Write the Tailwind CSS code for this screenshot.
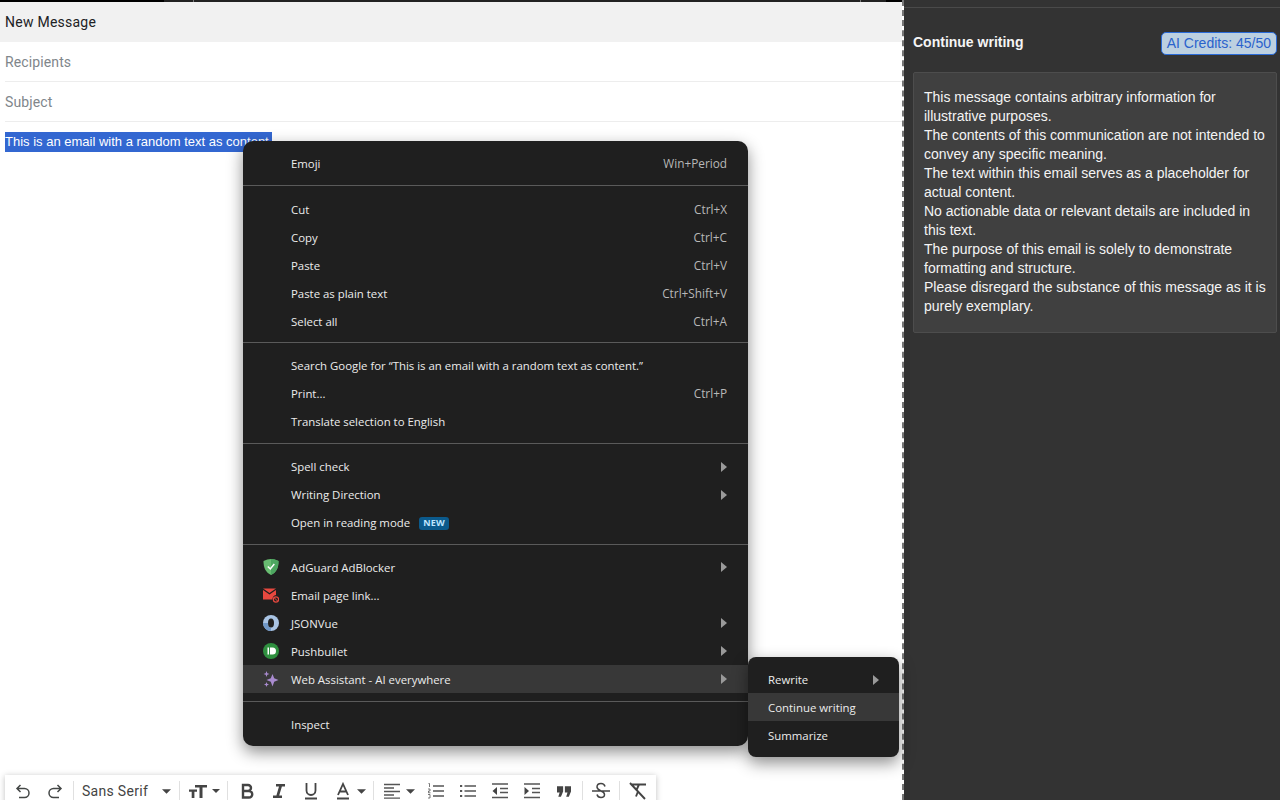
<!DOCTYPE html>
<html lang="en">
<head>
  <meta charset="UTF-8" />
  <title>New Message</title>
  <script src="https://cdn.jsdelivr.net/npm/@tailwindcss/browser@4"></script>
</head>
<body class="relative w-[1280px] h-[800px] overflow-hidden bg-white font-['Roboto',sans-serif]">

  <div class="flex h-[800px]">
    <!-- Compose -->
    <div class="relative w-[902px] flex flex-col bg-white">
      <div class="h-[2px] flex bg-[#222222]">
        <div class="w-[164px] bg-black"></div>
        <div class="ml-[29px] w-px bg-[#777777]"></div>
        <div class="ml-[666px] w-px bg-[#777777]"></div>
        <div class="ml-[25px] flex-1 bg-black"></div>
      </div>
      <div class="h-[40px] flex items-center pl-[5px] bg-[#f1f1f1] text-[14px] tracking-[0.25px] text-[#202124]">New Message</div>
      <div class="ml-[5px] h-[40px] pt-[2px] flex items-center border-b border-[#ededed] text-[14px] tracking-[0.12px] text-[#80868b]">Recipients</div>
      <div class="ml-[5px] h-[40px] pt-[2px] flex items-center border-b border-[#ededed] text-[14px] tracking-[0.12px] text-[#80868b]">Subject</div>
      <div class="mt-[10px] ml-[5px] h-[20px] w-[267px] flex items-center whitespace-nowrap bg-[#3367d1] font-['Liberation_Sans',sans-serif] text-[13px] text-white">This is an email with a random text as content.</div>

      <!-- Format toolbar -->
      <div class="absolute left-[5px] top-[775px] w-[651px] h-[40px] flex items-center pl-[2px] bg-white shadow-[0_1px_6px_rgba(0,0,0,0.25)] text-[#444746]">
        <div class="flex items-center h-[32px] mt-[-8px]">
          <span class="w-[32px] flex justify-center"><svg class="w-[18px] h-[18px]" viewBox="0 0 18 18" fill="none" stroke="currentColor" stroke-width="1.5"><path d="M6.500 3 3 6.500 6.500 10M3 6.500h7.500a4.500 4.500 0 0 1 0 9H5"/></svg></span>
          <span class="w-[32px] flex justify-center"><svg class="w-[18px] h-[18px]" viewBox="0 0 18 18" fill="none" stroke="currentColor" stroke-width="1.5"><path d="M11.500 3 15 6.500 11.500 10M15 6.500H7.500a4.500 4.500 0 0 0 0 9H13"/></svg></span>
          <span class="w-px h-[20px] ml-[2px] bg-[#e0e0e0]"></span>
          <span class="w-[105px] flex items-center pl-[8px] text-[14px] tracking-[0.3px] text-[#444]">
            <span class="w-[80px]">Sans Serif</span>
            <svg class="w-[9px] h-[5px]" viewBox="0 0 10 5" fill="#444"><path d="M0 0h10L5 5z"/></svg>
          </span>
          <span class="w-px h-[20px] bg-[#e0e0e0]"></span>
          <span class="w-[47px] flex items-center pl-[9px]">
            <svg class="w-[18px] h-[16px]" viewBox="0 0 18 16" fill="#444"><path d="M6 2h12v2.600h-4.500V15h-3V4.600H6zM0 6.500h8v2.200H5.400V15H2.700V8.700H0z"/></svg>
            <svg class="ml-[5px] w-[8px] h-[4px]" viewBox="0 0 10 5" fill="#444"><path d="M0 0h10L5 5z"/></svg>
          </span>
          <span class="w-px h-[20px] bg-[#e0e0e0]"></span>
          <span class="w-[34px] flex justify-center ml-[2px]"><svg class="w-[16px] h-[16px]" viewBox="0 0 16 16" fill="none" stroke="#444" stroke-width="2.400"><path d="M4 2h5a3 3 0 0 1 0 6H4zM4 8h6a3.200 3.200 0 0 1 0 6.500H4z"/></svg></span>
          <span class="w-[30px] flex justify-center"><svg class="w-[16px] h-[16px]" viewBox="0 0 16 16" fill="#444"><path d="M5 1h9v2.400h-3.100L8.200 12.600H11V15H2v-2.400h3.400L8 3.400H5z"/></svg></span>
          <span class="w-[34px] flex justify-center"><svg class="w-[16px] h-[18px]" viewBox="0 0 16 18" fill="none" stroke="#444" stroke-width="1.800"><path d="M3.500 1v7.500a4.500 4.500 0 0 0 9 0V1M2 16.500h12"/></svg></span>
          <span class="w-[30px] flex justify-center"><svg class="w-[16px] h-[18px]" viewBox="0 0 16 18" fill="none" stroke="#444" stroke-width="1.800"><path d="M3 13 8 2l5 11M4.500 9.500h7M2 16.500h12"/></svg></span>
          <svg class="ml-[-1px] w-[9px] h-[5px]" viewBox="0 0 10 5" fill="#444"><path d="M0 0h10L5 5z"/></svg>
          <span class="w-px h-[20px] ml-[7px] bg-[#e0e0e0]"></span>
          <span class="w-[36px] flex justify-center"><svg class="w-[16px] h-[16px]" viewBox="0 0 16 16" fill="none" stroke="#555" stroke-width="1.300"><path d="M0 1.500h16M0 5h10M0 8.500h16M0 12h10M0 15.200h16"/></svg></span>
          <svg class="ml-[-4px] w-[9px] h-[5px]" viewBox="0 0 10 5" fill="#444"><path d="M0 0h10L5 5z"/></svg>
          <span class="w-[32px] ml-[5px] flex justify-center"><svg class="w-[16px] h-[16px]" viewBox="0 0 16 16" fill="none" stroke="#555" stroke-width="1.300"><path d="M5 3h11M5 8h11M5 13h11"/><path d="M0.500 0.500h1v3.500M0 6h2v2H0.500v1.800H2.500M0 11.500h2v3.500H0" stroke-width="0.800"/></svg></span>
          <span class="w-[32px] flex justify-center"><svg class="w-[16px] h-[16px]" viewBox="0 0 16 16" fill="none" stroke="#555" stroke-width="1.300"><path d="M4.500 3H16M4.500 8H16M4.500 13H16"/><path d="M0 3h2.200M0 8h2.200M0 13h2.200" stroke-width="1.800"/></svg></span>
          <span class="w-[32px] flex justify-center"><svg class="w-[16px] h-[16px]" viewBox="0 0 16 16" fill="none" stroke="#555" stroke-width="1.300"><path d="M0 1h16M8 5.500h8M8 9.500h8M0 14.500h16"/><path d="M5 4v8L0.500 8z" fill="#444" stroke="none"/></svg></span>
          <span class="w-[32px] flex justify-center"><svg class="w-[16px] h-[16px]" viewBox="0 0 16 16" fill="none" stroke="#555" stroke-width="1.300"><path d="M0 1h16M8 5.500h8M8 9.500h8M0 14.500h16"/><path d="M0.500 4v8L5 8z" fill="#444" stroke="none"/></svg></span>
          <span class="w-[32px] flex justify-center"><svg class="w-[14px] h-[11px]" viewBox="0 0 16 12" fill="#444"><path d="M0 0h7v6L4.500 12H1.500L3 7H0zM9 0h7v6l-2.500 6h-3L12 7H9z"/></svg></span>
          <span class="w-px h-[20px] ml-[2px] bg-[#e0e0e0]"></span>
          <span class="w-[36px] flex justify-center"><svg class="w-[18px] h-[18px]" viewBox="0 0 18 18" fill="none" stroke="#444" stroke-width="1.500"><path d="M0 9h18M13 4.500C12.500 2.500 11 1.500 9 1.500 6.500 1.500 5 3 5 5c0 2 2 3 4 4 2.500 1 3.500 2 3.500 3.500 0 2-1.500 3-3.500 3s-3.500-1-4-3"/></svg></span>
          <span class="w-px h-[20px] bg-[#e0e0e0]"></span>
          <span class="w-[36px] flex justify-center"><svg class="w-[18px] h-[18px]" viewBox="0 0 18 18" fill="none" stroke="#444" stroke-width="1.900"><path d="M3 2.500h14M10 2.500 7.500 8M1 1l15 16M7 14.500 9 9.500"/></svg></span>
        </div>
      </div>
    </div>

    <!-- Dashed resize handle -->
    <div class="w-[2px] border-l-2 border-dashed border-[#777777]"></div>

    <!-- Assistant panel -->
    <div class="flex-1 bg-[#333333] font-['Liberation_Sans',sans-serif] text-[14px]">
      <div class="h-[8px] border-b border-[#4a4a4a]"></div>
      <div class="flex justify-between items-center pl-[9px] pr-[3px] mt-[24px] h-[22px]">
        <span class="font-bold text-[#f5f5f5] mb-[2px]">Continue writing</span>
        <span class="h-[23px] px-[5px] flex items-center rounded-[5px] border border-[#2a6bd8] bg-[#bcd0e0] text-[#2a62cc]">AI Credits: 45/50</span>
      </div>
      <div class="mt-[18px] ml-[9px] mr-[3px] h-[261px] pt-[15px] pl-[10px] pr-[8px] rounded-[2px] border border-[#4d4d4d] bg-[#404040] leading-[19px] text-[#f4f4f4]">
        <p>This message contains arbitrary information for illustrative purposes.</p>
        <p>The contents of this communication are not intended to convey any specific meaning.</p>
        <p>The text within this email serves as a placeholder for actual content.</p>
        <p>No actionable data or relevant details are included in this text.</p>
        <p>The purpose of this email is solely to demonstrate formatting and structure.</p>
        <p>Please disregard the substance of this message as it is purely exemplary.</p>
      </div>
    </div>
  </div>

  <!-- Context menu -->
  <div class="absolute left-[243px] top-[141px] w-[505px] h-[605px] py-[8px] rounded-[10px] bg-[#1f1f1f] shadow-[0_6px_16px_rgba(0,0,0,0.45)] font-['Open_Sans',sans-serif] text-[11.4px] text-[#ececec]">
    <div class="flex justify-between items-center h-[28px] pt-[2px] pl-[48px] pr-[21px]"><span>Emoji</span><span class="text-[11.8px] text-[#b8b8b8]">Win+Period</span></div>
    <div class="h-[18px] pt-[8px]"><div class="h-px bg-[#5a5a5a]"></div></div>
    <div class="flex justify-between items-center h-[28px] pt-[1px] pl-[48px] pr-[21px]"><span>Cut</span><span class="text-[11.8px] text-[#b8b8b8]">Ctrl+X</span></div>
    <div class="flex justify-between items-center h-[28px] pt-[2px] pl-[48px] pr-[21px]"><span>Copy</span><span class="text-[11.8px] text-[#b8b8b8]">Ctrl+C</span></div>
    <div class="flex justify-between items-center h-[28px] pt-[2px] pl-[48px] pr-[21px]"><span>Paste</span><span class="text-[11.8px] text-[#b8b8b8]">Ctrl+V</span></div>
    <div class="flex justify-between items-center h-[28px] pt-[2px] pl-[48px] pr-[21px]"><span>Paste as plain text</span><span class="text-[11.8px] text-[#b8b8b8]">Ctrl+Shift+V</span></div>
    <div class="flex justify-between items-center h-[28px] pt-[2px] pl-[48px] pr-[21px]"><span>Select all</span><span class="text-[11.8px] text-[#b8b8b8]">Ctrl+A</span></div>
    <div class="h-[16px] pt-[7px]"><div class="h-px bg-[#5a5a5a]"></div></div>
    <div class="flex justify-between items-center h-[28px] pt-[2px] pl-[48px] pr-[21px]"><span>Search Google for “This is an email with a random text as content.”</span></div>
    <div class="flex justify-between items-center h-[28px] pt-[2px] pl-[48px] pr-[21px]"><span>Print...</span><span class="text-[11.8px] text-[#b8b8b8]">Ctrl+P</span></div>
    <div class="flex justify-between items-center h-[28px] pt-[2px] pl-[48px] pr-[21px]"><span>Translate selection to English</span></div>
    <div class="h-[17px] pt-[8px]"><div class="h-px bg-[#5a5a5a]"></div></div>
    <div class="flex justify-between items-center h-[28px] pt-[2px] pl-[48px] pr-[21px]"><span>Spell check</span><svg class="w-[6px] h-[10px]" viewBox="0 0 6 10" fill="#9a9a9a"><path d="M0 0l6 5-6 5z"/></svg></div>
    <div class="flex justify-between items-center h-[28px] pt-[2px] pl-[48px] pr-[21px]"><span>Writing Direction</span><svg class="w-[6px] h-[10px]" viewBox="0 0 6 10" fill="#9a9a9a"><path d="M0 0l6 5-6 5z"/></svg></div>
    <div class="flex items-center h-[28px] pt-[2px] pl-[48px] pr-[21px]"><span>Open in reading mode</span><span class="ml-[9px] h-[13px] w-[30px] flex items-center justify-center rounded-[3px] bg-[#0b5a8c] text-[9px] font-bold tracking-[0.3px] text-[#bfe6ff]">NEW</span></div>
    <div class="h-[17px] pt-[8px]"><div class="h-px bg-[#5a5a5a]"></div></div>

    <div class="flex items-center h-[28px] pl-[20px] pr-[21px]">
      <svg class="w-[16px] h-[16px] mr-[12px]" viewBox="0 0 16 16"><path d="M8 0C5.500 0 3 .7 0.500 2c0 6 1.500 11 7.500 14 6-3 7.500-8 7.500-14C13 .7 10.500 0 8 0z" fill="#68bc71"/><path d="M8 0c2.500 0 5 .7 7.500 2 0 6-1.500 11-7.500 14z" fill="#4da660"/><path d="M4.800 7.500 7.300 10l4-5" fill="none" stroke="#ffffff" stroke-width="1.500"/></svg>
      <span class="flex-1 pt-[2px]">AdGuard AdBlocker</span><svg class="w-[6px] h-[10px]" viewBox="0 0 6 10" fill="#9a9a9a"><path d="M0 0l6 5-6 5z"/></svg>
    </div>
    <div class="flex items-center h-[28px] pl-[20px] pr-[21px]">
      <svg class="w-[16px] h-[16px] mr-[12px]" viewBox="0 0 16 16"><path d="M0 1.500h13L6.500 6zM0 3v9.500h9.500A4 4 0 0 1 13 8V3L6.500 7.500z" fill="#e8483f"/><circle cx="13" cy="12.500" r="2.600" fill="none" stroke="#e8483f" stroke-width="1.200"/><path d="M11.500 11l3 3" stroke="#e8483f" stroke-width="1"/></svg>
      <span class="flex-1 pt-[2px]">Email page link...</span>
    </div>
    <div class="flex items-center h-[28px] pl-[20px] pr-[21px]">
      <svg class="w-[16px] h-[16px] mr-[12px]" viewBox="0 0 16 16"><circle cx="8" cy="8" r="8" fill="#a9c4e4"/><path d="M0 8a8 8 0 0 0 8 8V13C6 13 5 10.500 5 8z" fill="#6f97c6"/><ellipse cx="8" cy="8" rx="3" ry="4.600" fill="#1f1f1f"/></svg>
      <span class="flex-1 pt-[2px]">JSONVue</span><svg class="w-[6px] h-[10px]" viewBox="0 0 6 10" fill="#9a9a9a"><path d="M0 0l6 5-6 5z"/></svg>
    </div>
    <div class="flex items-center h-[28px] pl-[20px] pr-[21px]">
      <svg class="w-[16px] h-[16px] mr-[12px]" viewBox="0 0 16 16"><circle cx="8" cy="8" r="8" fill="#2f8f3f"/><path d="M4.500 4.500h1.500v7H4.500zM7 4.500h2.500a3.500 3.500 0 0 1 0 7H7z" fill="#ffffff"/></svg>
      <span class="flex-1 pt-[2px]">Pushbullet</span><svg class="w-[6px] h-[10px]" viewBox="0 0 6 10" fill="#9a9a9a"><path d="M0 0l6 5-6 5z"/></svg>
    </div>
    <div class="flex items-center h-[28px] pl-[20px] pr-[21px] bg-[#383838]">
      <svg class="w-[16px] h-[16px] mr-[12px]" viewBox="0 0 16 16" fill="#a98bcf"><path d="M9.500 3 11.200 7.300 15.500 9 11.200 10.700 9.500 15.500 7.800 10.700 3.500 9 7.800 7.300zM3.500 0l.8 2.200L6.500 3l-2.200.8-.8 2.200-.8-2.200L.5 3l2.200-.8zM3.500 11l.7 1.800L6 13.500l-1.800.7L3.500 16l-.7-1.800L1 13.500l1.800-.7z"/></svg>
      <span class="flex-1 pt-[2px]">Web Assistant - AI everywhere</span><svg class="w-[6px] h-[10px]" viewBox="0 0 6 10" fill="#9a9a9a"><path d="M0 0l6 5-6 5z"/></svg>
    </div>
    <div class="h-[17px] pt-[8px]"><div class="h-px bg-[#5a5a5a]"></div></div>
    <div class="flex justify-between items-center h-[28px] pt-[2px] pl-[48px] pr-[21px]"><span>Inspect</span></div>
  </div>

  <!-- Submenu -->
  <div class="absolute left-[748px] top-[657px] w-[151px] h-[100px] py-[8px] rounded-[8px] bg-[#1f1f1f] shadow-[0_6px_16px_rgba(0,0,0,0.45)] font-['Open_Sans',sans-serif] text-[11.4px] text-[#ececec]">
    <div class="flex justify-between items-center h-[28px] pt-[2px] pl-[20px] pr-[20px]"><span>Rewrite</span><svg class="w-[6px] h-[10px]" viewBox="0 0 6 10" fill="#9a9a9a"><path d="M0 0l6 5-6 5z"/></svg></div>
    <div class="flex items-center h-[28px] pt-[2px] pl-[20px] bg-[#383838]">Continue writing</div>
    <div class="flex items-center h-[28px] pt-[2px] pl-[20px]">Summarize</div>
  </div>
</body>
</html>
